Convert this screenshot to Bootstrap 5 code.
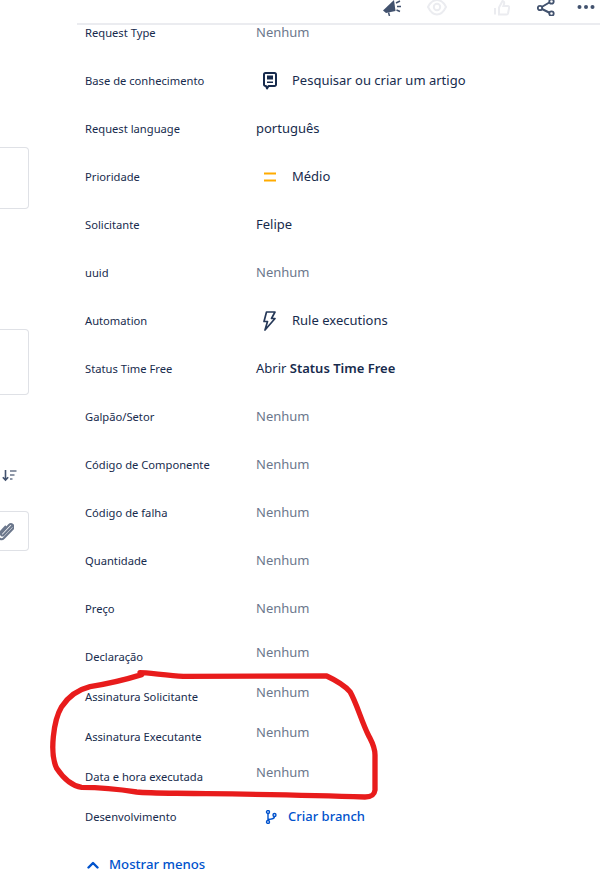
<!DOCTYPE html>
<html lang="pt">
<head>
<meta charset="utf-8">
<title>Detalhes</title>
<link href="https://cdn.jsdelivr.net/npm/bootstrap@5.3.0/dist/css/bootstrap.min.css" rel="stylesheet">
<style>
html,body{height:885px;overflow:hidden;background:#fff}
body{font-family:"Noto Sans","Open Sans",sans-serif;font-size:13px;color:#172b4d;position:relative}
.side-col{width:77px;flex:none;overflow:hidden;height:885px}
.stub{width:29px;border:1px solid #dfe1e6;border-left:0;border-radius:0 4px 4px 0}
.stub-a{height:62px;margin-top:147px}
.stub-b{height:66px;margin-top:120px}
.stub-c{height:40px;margin-top:28px}
.sort-ic{display:block;margin:74px 0 0 1px}
.main-col{width:523px;flex:none}
.top-bar{height:25px;border-bottom:2px solid #ebecf0;overflow:hidden;padding-right:5px}
.top-bar svg{display:block;height:16px;flex:none}
.g1{margin-left:25px}.g2{margin-left:47px}.g3{margin-left:27px}.g4{margin-left:22px}
.fields{margin-top:-16px}
.field{height:48px}
.field-short{height:44px}
.field-tight{height:40px}
.f-label{width:179px;flex:none;padding-left:8px;font-size:11.2px;line-height:16px}
.f-val{line-height:20px;margin-bottom:2px}
.muted-val{color:#6b778c}
.shift-up{transform:translateY(-4px)}
.ic-box{width:36px;flex:none;padding-left:3px}
.ic-narrow{width:32px}
.branch-ic{margin-left:6px}
.link-val{color:#0052cc;font-weight:500}
.more-row{color:#0052cc;font-weight:500;font-size:13.2px;padding-left:10px;height:20px;margin-top:18px}
.more-row svg{margin-right:10px}
.scribble{position:absolute;left:40px;top:660px;pointer-events:none}
</style>
</head>
<body>
<div class="d-flex">
  <div class="side-col">
    <div class="stub stub-a"></div>
    <div class="stub stub-b"></div>
    <svg class="sort-ic" width="16" height="14" viewBox="0 0 16 14"><path d="M4.500 1v10M1.800 8.200 4.500 11l2.700-2.800" fill="none" stroke="#42526e" stroke-width="1.600"/><path d="M9 2h6.500M9 6h4.500M9 10h2.500" fill="none" stroke="#6b778c" stroke-width="1.600"/></svg>
    <div class="stub stub-c d-flex align-items-center justify-content-start">
      <svg width="14" height="21" viewBox="3 0 14 21"><path d="M15.500 4.500 6.500 14c-1.400 1.500-3.400-.4-2-1.900L12 4c2.400-2.500 6.300 1.100 3.900 3.700L7 17c-3.100 3.300-8-1.300-4.900-4.600L9 5" fill="none" stroke="#6b778c" stroke-width="2"/></svg>
    </div>
  </div>
  <div class="main-col">
    <div class="top-bar d-flex justify-content-end">
      <svg width="19" viewBox="0 0 19 16"><path d="M0 10.500 11 0l1.500 11L3 13z" fill="#42526e"/><path d="M5.500 12.500 6.500 16M13 3l4-2M14 6.500h4M13.500 10l3.500 1.500" fill="none" stroke="#42526e" stroke-width="1.500"/></svg>
      <svg class="g1" width="20" viewBox="0 0 20 16"><path d="M1 7C3.500 2 7 0 10 0s6.500 2 9 7c-2.500 5-6 7.500-9 7.500S3.500 12 1 7z" fill="none" stroke="#ebecf0" stroke-width="2"/><circle cx="10" cy="7" r="3.200" fill="none" stroke="#ebecf0" stroke-width="2"/></svg>
      <svg class="g2" width="16" viewBox="0 0 16 16"><path d="M1 8v6.500M5 7.500 8.500 1c1.500 0 2 1.500 1.500 3l-.6 2h4.400c1 0 1.500 1 1.300 2l-1.100 5.500c-.2.700-.7 1-1.400 1H5z" fill="none" stroke="#ebecf0" stroke-width="2"/></svg>
      <svg class="g3" width="18" viewBox="0 0 18 16"><path d="M3 8l11-6.500M3 8l11 5.500" stroke="#42526e" stroke-width="2" fill="none"/><circle cx="3" cy="8" r="2.200" fill="#fff" stroke="#42526e" stroke-width="1.800"/><circle cx="14.500" cy="1.500" r="2.200" fill="#fff" stroke="#42526e" stroke-width="1.800"/><circle cx="14.500" cy="13.500" r="2.200" fill="#fff" stroke="#42526e" stroke-width="1.800"/></svg>
      <svg class="g4" width="18" viewBox="0 0 18 16"><circle cx="2.500" cy="7" r="2" fill="#42526e"/><circle cx="9" cy="7" r="2" fill="#42526e"/><circle cx="15.500" cy="7" r="2" fill="#42526e"/></svg>
    </div>
    <div class="fields">
      <div class="field d-flex align-items-center"><div class="f-label">Request Type</div><div class="f-val muted-val">Nenhum</div></div>
      <div class="field d-flex align-items-center"><div class="f-label">Base de conhecimento</div><div class="ic-box"><svg class="d-block ms-1" width="14" height="18" viewBox="0 0 14 18"><path d="M2.500 1h9A1.500 1.500 0 0 1 13 2.500v10a1.500 1.500 0 0 1-1.500 1.500H5.500L4 16.500 3 14h-.5A1.500 1.500 0 0 1 1 12.500v-10A1.500 1.500 0 0 1 2.500 1z" fill="#fff" stroke="#172b4d" stroke-width="2" stroke-linejoin="round"/><path d="M4 3.500h6v4H4zM4 9.500h6V11H4z" fill="#172b4d"/></svg></div><div class="f-val">Pesquisar ou criar um artigo</div></div>
      <div class="field d-flex align-items-center"><div class="f-label">Request language</div><div class="f-val">português</div></div>
      <div class="field d-flex align-items-center"><div class="f-label">Prioridade</div><div class="ic-box"><svg class="d-block ms-1" width="14" height="10" viewBox="0 0 14 10"><path d="M1 1.500h12M1 8.500h12" stroke="#ffab00" stroke-width="2"/></svg></div><div class="f-val">Médio</div></div>
      <div class="field d-flex align-items-center"><div class="f-label">Solicitante</div><div class="f-val">Felipe</div></div>
      <div class="field d-flex align-items-center"><div class="f-label">uuid</div><div class="f-val muted-val">Nenhum</div></div>
      <div class="field d-flex align-items-center"><div class="f-label">Automation</div><div class="ic-box"><svg class="d-block ms-1" width="13" height="20" viewBox="0 0 13 20"><path d="M3.500 1h8.500L8.500 7.500h3.500L2 19l2.500-8.500H1z" fill="none" stroke="#253858" stroke-width="1.700" stroke-linejoin="round"/></svg></div><div class="f-val">Rule executions</div></div>
      <div class="field d-flex align-items-center"><div class="f-label">Status Time Free</div><div class="f-val">Abrir <strong class="fw-semibold">Status Time Free</strong></div></div>
      <div class="field d-flex align-items-center"><div class="f-label">Galpão/Setor</div><div class="f-val muted-val">Nenhum</div></div>
      <div class="field d-flex align-items-center"><div class="f-label">Código de Componente</div><div class="f-val muted-val">Nenhum</div></div>
      <div class="field d-flex align-items-center"><div class="f-label">Código de falha</div><div class="f-val muted-val">Nenhum</div></div>
      <div class="field d-flex align-items-center"><div class="f-label">Quantidade</div><div class="f-val muted-val">Nenhum</div></div>
      <div class="field d-flex align-items-center"><div class="f-label">Preço</div><div class="f-val muted-val">Nenhum</div></div>
      <div class="field-short d-flex align-items-center pt-1"><div class="f-label">Declaração</div><div class="f-val muted-val shift-up">Nenhum</div></div>
      <div class="field-tight d-flex align-items-center"><div class="f-label">Assinatura Solicitante</div><div class="f-val muted-val shift-up">Nenhum</div></div>
      <div class="field-tight d-flex align-items-center"><div class="f-label">Assinatura Executante</div><div class="f-val muted-val shift-up">Nenhum</div></div>
      <div class="field-tight d-flex align-items-center"><div class="f-label">Data e hora executada</div><div class="f-val muted-val shift-up">Nenhum</div></div>
      <div class="field-tight d-flex align-items-center"><div class="f-label">Desenvolvimento</div><div class="ic-box ic-narrow"><svg class="d-block branch-ic" width="12" height="14" viewBox="0 0 12 14"><circle cx="3" cy="2" r="1.500" fill="none" stroke="#0052cc" stroke-width="1.400"/><circle cx="3" cy="12" r="1.500" fill="none" stroke="#0052cc" stroke-width="1.400"/><circle cx="9.500" cy="5" r="1.500" fill="none" stroke="#0052cc" stroke-width="1.400"/><path d="M3 3.500v7M9.500 6.500c0 2-1.500 2.500-6.500 3" fill="none" stroke="#0052cc" stroke-width="1.400"/></svg></div><div class="f-val link-val">Criar branch</div></div>
      <div class="more-row d-flex align-items-center"><svg width="12" height="8" viewBox="0 0 12 8"><path d="M1.500 6.500 6 2l4.500 4.500" fill="none" stroke="#0052cc" stroke-width="2.400" stroke-linecap="round" stroke-linejoin="round"/></svg><span>Mostrar menos</span></div>
    </div>
  </div>
</div>
<svg class="scribble" width="350" height="150" viewBox="0 0 1050 450"><path d="M300 38C320 38 380 46 430 49L860 48C890 62 915 78 930 95C950 130 965 185 985 225C995 245 1005 260 1005 285L1005 390C1003 405 995 411 975 411C800 405 650 403 500 401C400 399 330 400 290 396C240 388 180 382 125 382C95 378 70 355 50 325C38 300 36 270 40 230C44 190 50 165 65 140C85 110 110 90 150 80C200 72 260 58 305 44" fill="none" stroke="#e81c1c" stroke-width="16" stroke-linecap="round" stroke-linejoin="round"/></svg>
<script src="https://cdn.jsdelivr.net/npm/bootstrap@5.3.0/dist/js/bootstrap.bundle.min.js"></script>
</body>
</html>
